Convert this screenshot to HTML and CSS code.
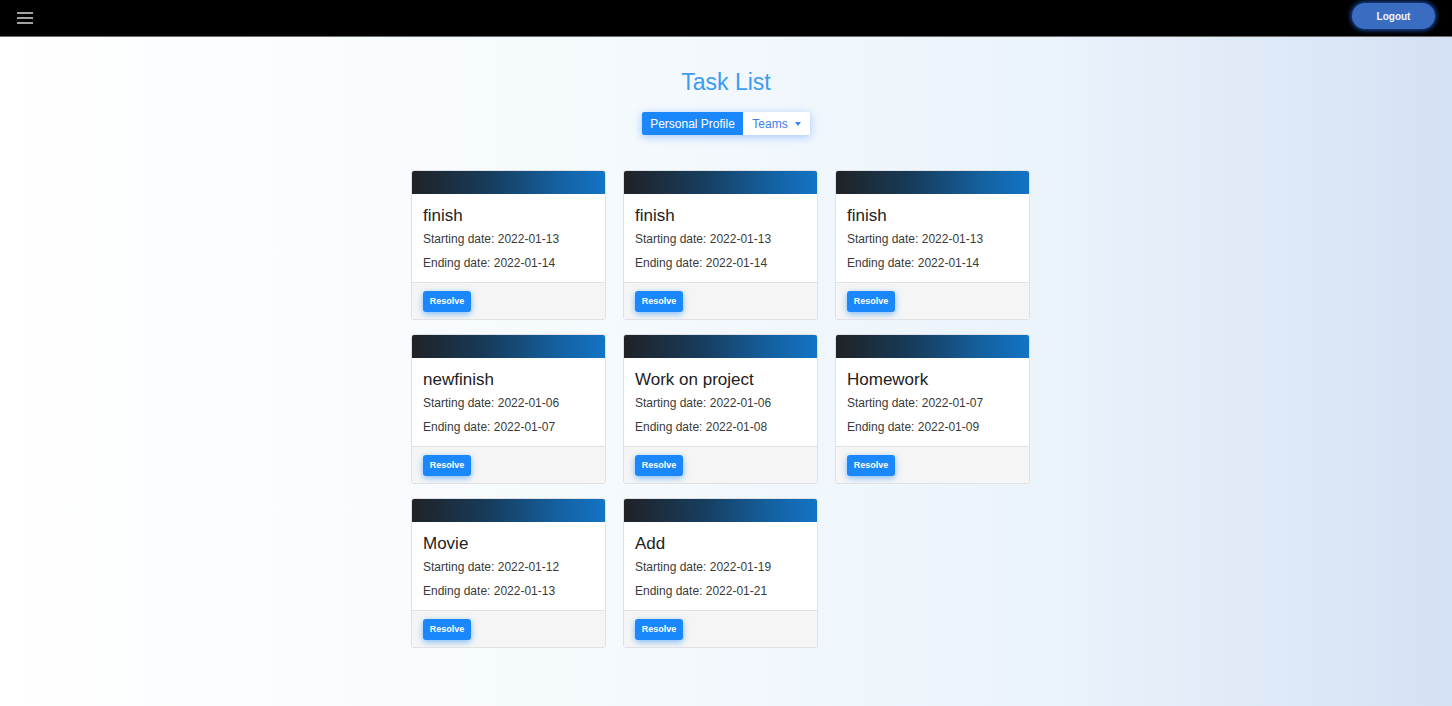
FILE: index.html
```html
<!DOCTYPE html>
<html lang="en">
<head>
<meta charset="utf-8">
<title>Task List</title>
<link rel="stylesheet" href="styles.css">
</head>
<body>
<nav class="navbar">
  <button class="menu-btn" aria-label="menu">
    <svg width="16" height="12" viewBox="0 0 16 12"><path d="M0 1h16M0 6h16M0 11h16" stroke="#d8d8d8" stroke-width="1.4"/></svg>
  </button>
  <button class="logout">Logout</button>
</nav>
<main class="main">
  <h1 class="title">Task List</h1>
  <div class="btn-group">
    <button class="seg seg-active">Personal Profile</button>
    <button class="seg seg-light">Teams <span class="caret"></span></button>
  </div>
  <div class="grid-wrap">
    <div class="grid">
      <div class="card"><div class="card-head"></div><div class="card-body"><h2 class="card-title">finish</h2><p class="line">Starting date: 2022-01-13</p><p class="line">Ending date: 2022-01-14</p></div><div class="card-foot"><button class="resolve">Resolve</button></div></div>
      <div class="card"><div class="card-head"></div><div class="card-body"><h2 class="card-title">finish</h2><p class="line">Starting date: 2022-01-13</p><p class="line">Ending date: 2022-01-14</p></div><div class="card-foot"><button class="resolve">Resolve</button></div></div>
      <div class="card"><div class="card-head"></div><div class="card-body"><h2 class="card-title">finish</h2><p class="line">Starting date: 2022-01-13</p><p class="line">Ending date: 2022-01-14</p></div><div class="card-foot"><button class="resolve">Resolve</button></div></div>
      <div class="card"><div class="card-head"></div><div class="card-body"><h2 class="card-title">newfinish</h2><p class="line">Starting date: 2022-01-06</p><p class="line">Ending date: 2022-01-07</p></div><div class="card-foot"><button class="resolve">Resolve</button></div></div>
      <div class="card"><div class="card-head"></div><div class="card-body"><h2 class="card-title">Work on project</h2><p class="line">Starting date: 2022-01-06</p><p class="line">Ending date: 2022-01-08</p></div><div class="card-foot"><button class="resolve">Resolve</button></div></div>
      <div class="card"><div class="card-head"></div><div class="card-body"><h2 class="card-title">Homework</h2><p class="line">Starting date: 2022-01-07</p><p class="line">Ending date: 2022-01-09</p></div><div class="card-foot"><button class="resolve">Resolve</button></div></div>
      <div class="card"><div class="card-head"></div><div class="card-body"><h2 class="card-title">Movie</h2><p class="line">Starting date: 2022-01-12</p><p class="line">Ending date: 2022-01-13</p></div><div class="card-foot"><button class="resolve">Resolve</button></div></div>
      <div class="card"><div class="card-head"></div><div class="card-body"><h2 class="card-title">Add</h2><p class="line">Starting date: 2022-01-19</p><p class="line">Ending date: 2022-01-21</p></div><div class="card-foot"><button class="resolve">Resolve</button></div></div>
    </div>
  </div>
</main>
</body>
</html>
```
FILE: styles.css
```css
* { box-sizing: border-box; }
html, body { height: 100%; }
body {
  margin: 0;
  font-family: "Liberation Sans", Arial, sans-serif;
  color: #212529;
  background: linear-gradient(to right, #ffffff 0%, #f5fafd 40%, #ebf3fb 72%, #d5e1f4 100%);
  min-height: 706px;
}
.navbar {
  height: 37px;
  background: #000;
  border-bottom: 1px solid #6b6b6b;
  display: flex;
  align-items: center;
  justify-content: space-between;
  padding: 0 17px 0 17px;
}
.menu-btn {
  background: none;
  border: 0;
  padding: 0;
  display: flex;
}
.logout {
  width: 83px;
  height: 26px;
  margin-top: -4px;
  border: 0;
  border-radius: 13px;
  background: #3a6cc2;
  color: #f2f5fb;
  font-family: "Liberation Sans", Arial, sans-serif;
  font-size: 10px;
  font-weight: bold;
  box-shadow: 0 0 5px 1px rgba(40, 120, 255, 0.75);
}
.main {
  display: flex;
  flex-direction: column;
  align-items: center;
}
.title {
  margin: 30px 0 0;
  font-size: 23px;
  line-height: 30px;
  font-weight: normal;
  color: #3c9cf2;
}
.btn-group {
  display: flex;
  margin-top: 15px;
  box-shadow: 0 2px 8px rgba(20, 110, 255, 0.35);
  border-radius: 2px;
}
.seg {
  height: 23px;
  border: 0;
  font-family: "Liberation Sans", Arial, sans-serif;
  font-size: 12px;
  padding: 0;
  display: flex;
  align-items: center;
  justify-content: center;
  white-space: nowrap;
}
.seg-active {
  background: #1a88fb;
  color: #fff;
  width: 101px;
  border-radius: 2px 0 0 2px;
}
.seg-light {
  background: #fff;
  color: #3b7ff0;
  width: 67px;
  border-radius: 0 2px 2px 0;
  gap: 7px;
}
.caret {
  width: 0;
  height: 0;
  border-left: 3.5px solid transparent;
  border-right: 3.5px solid transparent;
  border-top: 4px solid #3b7ff0;
}
.grid-wrap {
  width: 630px;
  margin-top: 35px;
}
.grid {
  display: grid;
  grid-template-columns: repeat(3, 195px);
  column-gap: 17px;
  row-gap: 14px;
}
.card {
  background: #fff;
  border: 1px solid #dfe1e4;
  border-radius: 3px;
  overflow: hidden;
}
.card-head {
  height: 23px;
  background: linear-gradient(to right, #202226 0%, #173c5c 40%, #14609e 75%, #1374c6 100%);
}
.card-body {
  padding: 11px 11px 11px;
}
.card-title {
  margin: 0 0 5px;
  font-size: 17px;
  line-height: 21px;
  font-weight: normal;
  color: #222;
}
.line {
  margin: 0 0 8px;
  font-size: 12px;
  line-height: 16px;
  color: #3a3a3a;
}
.line:first-of-type { margin-top: 1px; }
.line:last-child { margin-bottom: 0; }
.card-foot {
  background: #f5f5f5;
  border-top: 1px solid #e2e2e2;
  height: 37px;
  padding: 7px 11px 0;
}
.resolve {
  width: 48px;
  height: 21px;
  border: 0;
  border-radius: 3px;
  background: #1a88fb;
  color: #fff;
  font-family: "Liberation Sans", Arial, sans-serif;
  font-size: 9px;
  font-weight: bold;
  padding: 0;
  box-shadow: 0 2px 6px rgba(26, 136, 251, 0.55);
}
```
